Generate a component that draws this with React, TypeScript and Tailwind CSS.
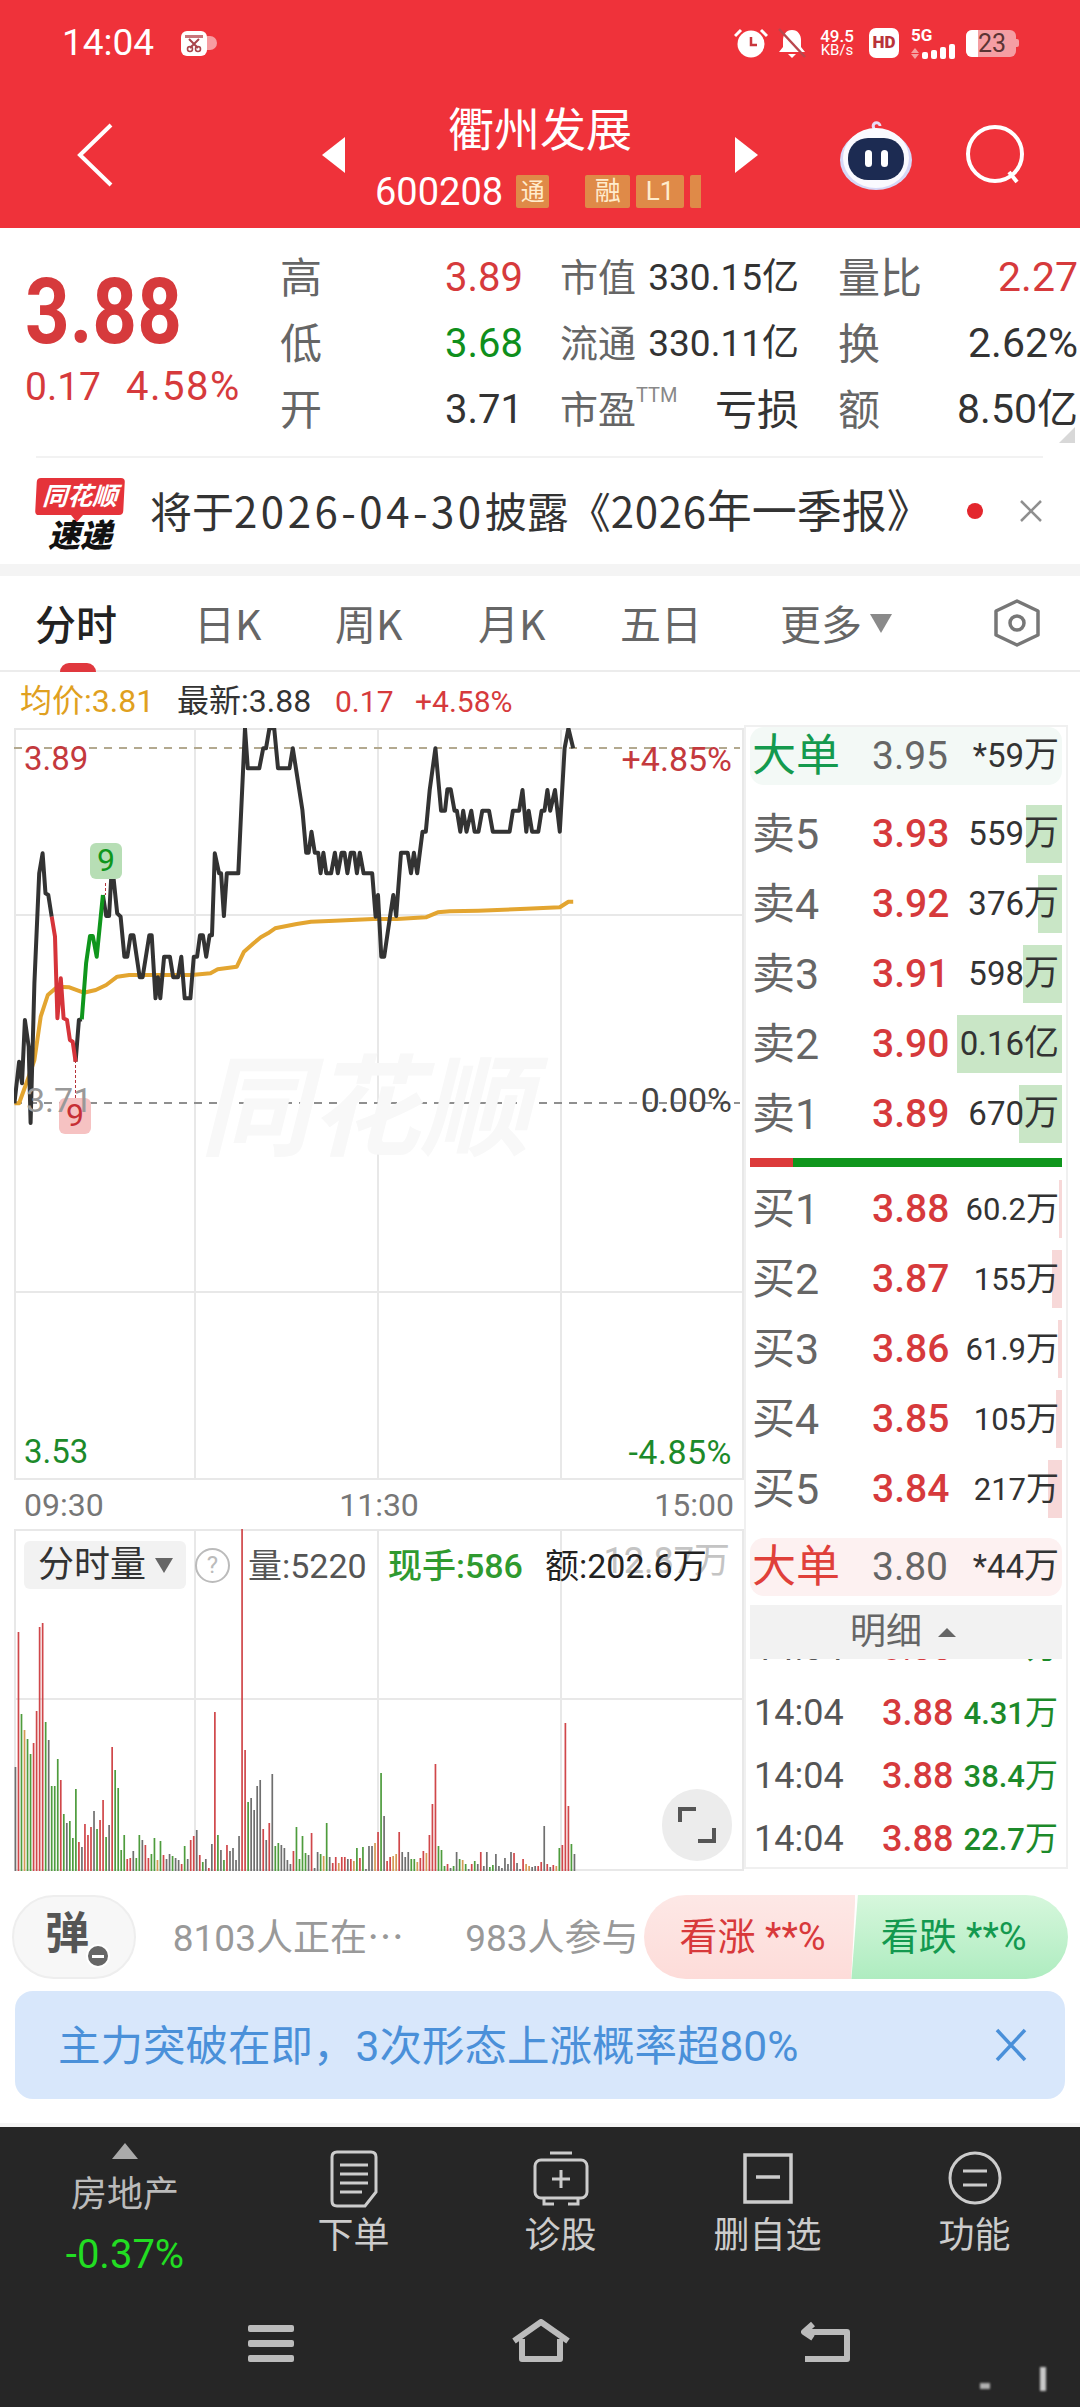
type Pt = [number, number];

// chart points were read off a 2.09x / 3x crop of the chart
const mapPts = (pts: Pt[]) => pts.map(([x, y]) => `${(x / 2.09).toFixed(1)},${(700 + y / 3).toFixed(1)}`).join(' ');

const blackA: Pt[] = [[30, 1210], [40, 1085], [46, 1150], [52, 960], [60, 1040], [64, 1269], [72, 850], [82, 520], [89, 460], [95, 580], [101, 585], [108, 650]];
const redLine: Pt[] = [[108, 650], [115, 710], [120, 955], [127, 835], [133, 955], [140, 960], [146, 1020], [152, 1025], [158, 1085]];
const blackB: Pt[] = [[158, 1085], [165, 960], [171, 958]];
const greenLine: Pt[] = [[171, 958], [180, 790], [188, 708], [194, 708], [202, 770], [215, 585]];
const blackC: Pt[] = [
  [215, 585], [222, 648], [228, 648], [234, 490], [245, 640], [252, 650], [260, 770], [266, 770], [273, 706], [279, 706], [292, 832], [298, 832], [312, 706], [317, 706], [325, 895], [330, 832], [335, 895], [343, 770], [355, 770], [362, 832], [372, 832], [379, 770], [386, 895], [398, 895], [405, 770], [412, 770], [418, 706], [424, 706], [431, 770], [438, 706], [443, 706], [449, 460], [458, 520], [462, 520], [468, 648], [474, 520], [498, 520], [512, 85], [518, 205], [542, 205], [550, 145], [556, 145], [563, 85], [573, 85], [581, 205], [605, 205], [612, 145], [632, 330], [640, 458], [645, 458], [651, 395], [658, 458], [665, 458], [670, 520], [676, 458], [682, 520], [692, 520], [700, 458], [706, 520], [714, 458], [720, 458], [726, 520], [733, 458], [740, 458], [746, 520], [752, 458], [760, 520], [778, 520], [785, 650], [790, 585], [797, 770], [803, 770], [815, 650], [822, 585], [828, 648], [838, 458], [852, 458], [859, 520], [865, 458], [872, 520], [883, 395], [890, 395], [898, 270], [910, 145], [922, 332], [930, 332], [935, 268], [942, 268], [950, 332], [955, 332], [962, 395], [968, 332], [975, 395], [985, 332], [992, 395], [1000, 395], [1008, 332], [1022, 332], [1030, 395], [1065, 395], [1072, 332], [1085, 332], [1092, 270], [1100, 395], [1105, 332], [1112, 395], [1125, 395], [1132, 332], [1138, 332], [1144, 270], [1150, 332], [1160, 270], [1170, 395], [1180, 145], [1188, 85], [1198, 145],
];
const avgLine: Pt[] = [[30, 1210], [40, 1210], [60, 1130], [72, 1080], [85, 950], [100, 885], [120, 860], [145, 862], [175, 878], [200, 870], [222, 855], [245, 830], [270, 825], [400, 825], [440, 820], [455, 808], [495, 800], [510, 755], [530, 730], [545, 712], [560, 700], [575, 685], [620, 672], [650, 665], [700, 662], [780, 657], [830, 657], [890, 652], [915, 637], [940, 634], [1000, 632], [1100, 626], [1170, 622], [1188, 605], [1198, 605]];

const volData =
  '104k 239r 157n 141o 132n 117n 128r 160r 244r 248r 149n 131k 85n 85n 112n 91r 57n 48k 50n 33n 82n 29r 24k 47r 36r 44r 60k 42n 51r 71r 34n 46k 124r 101n 83n 21n 36n 12r 13r 20k 13n 36n 31k 26r 13r 17n 33n 11o 30n 16r 12k 17k 15n 13k 11k 7r 25n 12k 31r 35r 41k 16r 9n 12k 3r 27k 159r 36n 21k 11n 26r 20k 23k 11k 35k 342r 121r 69n 73k 61k 85k 91k 42r 31k 48r 97k 25n 28n 26k 23k 11k 7k 20r 44n 12n 35n 18n 16k 38r 3k 19k 17n 15o 48n 14k 8r 14r 8o 14r 14r 12k 12r 10o 23n 13r 24n 2k 25k 25k 28o 39r 98n 55k 10r 14r 15o 17o 39r 19k 14k 19k 12n 12n 9o 13r 20r 18o 36r 67r 107r 25n 21n 5n 7r 3k 5n 19k 12n 11o 7n 2k 7r 10n 7k 19r 5k 19k 4n 6n 17k 5k 3k 13k 7k 19k 18r 8k 2k 12r 7o 5o 4k 5k 5r 9r 45k 7r 4k 6r 5o 23n 26r 148r 65r 27n 17k'.split(' ');

const volColor: Record<string, string> = { r: '#d0474a', n: '#4e9c3d', k: '#6f6f6f', o: '#d49a55' };

const asks = [
  { n: '卖5', p: '3.93', v: '559', u: '万', w: 36 },
  { n: '卖4', p: '3.92', v: '376', u: '万', w: 24 },
  { n: '卖3', p: '3.91', v: '598', u: '万', w: 39 },
  { n: '卖2', p: '3.90', v: '0.16', u: '亿', w: 105 },
  { n: '卖1', p: '3.89', v: '670', u: '万', w: 43 },
];
const bids = [
  { n: '买1', p: '3.88', v: '60.2', u: '万', w: 3 },
  { n: '买2', p: '3.87', v: '155', u: '万', w: 10 },
  { n: '买3', p: '3.86', v: '61.9', u: '万', w: 4 },
  { n: '买4', p: '3.85', v: '105', u: '万', w: 6 },
  { n: '买5', p: '3.84', v: '217', u: '万', w: 14 },
];
const trades = ['4.31', '38.4', '22.7'];

function StatusIcons() {
  return (
    <div className="flex items-center">
      <svg width="34" height="30" viewBox="0 0 34 30" className="mr-[9px]">
        <circle cx="17" cy="16" r="13.5" fill="#fff" />
        <path d="M17 9v8h6" stroke="#c9363c" strokeWidth="2.5" fill="none" />
        <path d="M1 8 7 2M33 8l-6-6" stroke="#fff" strokeWidth="3" />
      </svg>
      <svg width="30" height="30" viewBox="0 0 28 30" className="mr-[11px]">
        <path d="M14 2c6 0 9 5 9 10v7l4 5H1l4-5v-7C5 7 8 2 14 2Z" fill="#fff" />
        <path d="M10 26h8l-4 4Z" fill="#fff" />
        <path d="M1 1 27 29" stroke="#b9474d" strokeWidth="2.5" />
      </svg>
      <div className="flex flex-col items-center w-[38px] text-white leading-[14px] mr-[13px]">
        <span className="text-[17px] font-medium">49.5</span>
        <span className="text-[15px]">KB/s</span>
      </div>
      <div className="w-[30px] h-[30px] bg-white rounded-[7px] text-[#b9333a] text-[17px] font-black flex items-center justify-center mr-[12px]">HD</div>
      <div className="flex flex-col w-[46px] mr-[9px]">
        <span className="text-white text-[17px] font-bold leading-[14px]">5G</span>
        <div className="flex items-end gap-[3px] mt-[2px]">
          <div className="flex flex-col gap-[1px]">
            <div className="w-0 h-0 border-x-[4px] border-x-transparent border-b-[5px] border-b-[#f5a0a0]" />
            <div className="w-0 h-0 border-x-[4px] border-x-transparent border-t-[5px] border-t-[#f5a0a0]" />
          </div>
          <div className="w-[6px] h-[7px] bg-white rounded-[2px]" />
          <div className="w-[6px] h-[9px] bg-white rounded-[2px]" />
          <div className="w-[6px] h-[12px] bg-white rounded-[2px]" />
          <div className="w-[6px] h-[15px] bg-white rounded-[2px]" />
        </div>
      </div>
      <div className="w-[50px] h-[27px] rounded-[6px] bg-[#f59ea3] flex">
        <div className="w-[12px] h-full bg-white rounded-l-[6px]" />
        <span className="text-[#5b3434] text-[25px] leading-[27px]">23</span>
      </div>
      <div className="w-[3px] h-[8px] bg-[#f59ea3] rounded-r-[2px]" />
    </div>
  );
}

function Robot() {
  return (
    <svg width="74" height="74" viewBox="0 0 74 74">
      <path d="M37 14c-3-4-4-7-1-9 3-1 5 1 5 3" stroke="#e8dcf5" strokeWidth="3" fill="none" />
      <ellipse cx="37" cy="42" rx="36" ry="30" fill="#d6d8f7" />
      <ellipse cx="37" cy="40" rx="33" ry="30" fill="#fafaff" />
      <rect x="9" y="20" width="56" height="42" rx="20" fill="#1c2b52" />
      <rect x="26" y="32" width="7" height="17" rx="3.5" fill="#fff" />
      <rect x="42" y="32" width="7" height="17" rx="3.5" fill="#fff" />
    </svg>
  );
}

function Header() {
  return (
    <div className="bg-[#ef323a] h-[228px] text-white">
      <div className="flex justify-between items-center h-[86px] pl-[62px] pr-[61px]">
        <div className="flex items-center">
          <span className="text-[37px]">14:04</span>
          <svg width="26" height="25" viewBox="0 0 26 25" className="ml-[27px]">
            <rect width="26" height="25" rx="6" fill="#fff" />
            <rect x="4" y="4" width="18" height="3" fill="#c9747a" />
            <path d="M8 8 17 17M18 8 9 17" stroke="#a8454c" strokeWidth="2" />
            <circle cx="9" cy="18" r="2.5" stroke="#a8454c" strokeWidth="1.6" fill="none" />
            <circle cx="17" cy="18" r="2.5" stroke="#a8454c" strokeWidth="1.6" fill="none" />
          </svg>
          <div className="w-[10px] h-[14px] rounded-r-full bg-[#f79ca1]" />
        </div>
        <StatusIcons />
      </div>
      <div className="flex items-center h-[142px] pb-[4px]">
        <svg width="36" height="64" viewBox="0 0 36 64" className="ml-[77px] shrink-0">
          <path d="M34 2 3 32 34 62" stroke="#fff" strokeWidth="4" fill="none" />
        </svg>
        <div className="ml-[209px] w-0 h-0 border-y-[18px] border-y-transparent border-r-[23px] border-r-white" />
        <div className="w-[390px] pb-[3px] flex flex-col items-center">
          <span className="text-[46px] leading-[56px] font-['Noto_Sans_CJK_SC',sans-serif]">衢州发展</span>
          <div className="flex items-center h-[36px] mt-[20px] w-[330px]">
            <span className="text-[38px] leading-[36px]">600208</span>
            <span className="ml-[13px] w-[33px] h-[33px] bg-[#df8a48] text-[#ffeccd] text-[24px] flex items-center justify-center rounded-[2px]">通</span>
            <span className="ml-[36px] w-[45px] h-[33px] bg-[#df8a48] text-[#ffeccd] text-[26px] flex items-center justify-center rounded-[2px]">融</span>
            <span className="ml-[6px] w-[48px] h-[33px] bg-[#df8a48] text-[#ffeccd] text-[26px] flex items-center justify-center rounded-[2px]">L1</span>
            <span className="ml-[6px] w-[11px] h-[33px] bg-[#df8a48] rounded-l-[2px]" />
          </div>
        </div>
        <div className="w-0 h-0 border-y-[18px] border-y-transparent border-l-[23px] border-l-white" />
        <div className="ml-[81px]">
          <Robot />
        </div>
        <svg width="62" height="62" viewBox="0 0 62 62" className="ml-[52px]">
          <circle cx="30" cy="30" r="27" stroke="#fff" strokeWidth="4" fill="none" />
          <path d="M44 48l8 10" stroke="#fff" strokeWidth="4" />
        </svg>
      </div>
    </div>
  );
}

function Quote() {
  const rowCls = 'h-[66px] flex items-center';
  return (
    <div className="relative h-[228px] flex">
      <div className="w-[280px] pl-[25px] pt-[35px] text-[#d63a3c]">
        <div className="text-[78px] leading-[100px] font-bold scale-y-[1.17]">3.88</div>
        <div className="flex items-center text-[39px] leading-[44px] mt-[2px]">
          <span className="w-[101px]">0.17</span>
          <span className="tracking-[1.5px] text-[40px]">4.58%</span>
        </div>
      </div>
      <div className="pt-[17px] text-[#333]">
        {[
          ['高', '3.89', 'text-[#d63a3c]', '市值', '330.15亿', '量比', '2.27', 'text-[#d63a3c]'],
          ['低', '3.68', 'text-[#0f8f1c]', '流通', '330.11亿', '换', '2.62%', 'text-[#333]'],
          ['开', '3.71', 'text-[#333]', '市盈', '亏损', '额', '8.50亿', 'text-[#333]'],
        ].map((r, i) => (
          <div key={i} className={rowCls}>
            <span className="w-[165px] text-[42px] text-[#666]">{r[0]}</span>
            <span className={`w-[115px] text-[40px] ${r[2]}`}>{r[1]}</span>
            <div className="w-[239px] flex items-center justify-between text-[37px]">
              <span className="text-[38px] text-[#666] flex items-start">
                {r[3]}
                {i === 2 && <span className="text-[20px] leading-[26px] text-[#888]">TTM</span>}
              </span>
              <span className={i === 2 ? 'text-[42px]' : ''}>{r[4]}</span>
            </div>
            <div className="ml-[39px] w-[240px] flex items-center justify-between">
              <span className="text-[42px] text-[#666]">{r[5]}</span>
              <span className={`text-[41px] whitespace-nowrap ${r[7]}`}>{r[6]}</span>
            </div>
          </div>
        ))}
      </div>
      <div className="absolute right-[5px] bottom-[13px] w-0 h-0 border-l-[16px] border-l-transparent border-b-[16px] border-b-[#d8d8d8]" />
    </div>
  );
}

function News() {
  return (
    <div className="pl-[36px] pr-[37px]">
      <div className="border-t-2 border-[#f2f2f2] h-[108px] flex items-center">
        <div className="w-[88px] flex flex-col items-center shrink-0 mt-[10px]">
          <div className="relative w-[88px] h-[37px] bg-[#e5333a] rounded-[4px] -skew-x-3 text-white text-[25px] leading-[37px] font-bold italic text-center">
            同花顺
            <div className="absolute left-[36px] top-[37px] w-0 h-0 border-x-[6px] border-x-transparent border-t-[7px] border-t-[#e5333a]" />
          </div>
          <div className="text-[32px] leading-[36px] mt-[3px] font-black italic text-[#111]">速递</div>
        </div>
        <div className="ml-[26px] pb-[5px] text-[42px] text-[#333] whitespace-nowrap font-['Noto_Sans_CJK_SC',sans-serif]">
          将于<span className="tracking-[3.5px]">2026-04-30</span>披露《<span className="tracking-[0.7px]">2026</span><span className="text-[45px]">年一季报》</span>
        </div>
        <div className="ml-auto w-[16px] h-[16px] rounded-full bg-[#e3262d] shrink-0" />
        <svg width="24" height="24" viewBox="0 0 24 24" className="ml-[36px] shrink-0">
          <path d="M2 2 22 22M22 2 2 22" stroke="#8f8f8f" strokeWidth="2.5" />
        </svg>
      </div>
    </div>
  );
}

function Tabs() {
  return (
    <div className="relative h-[96px] border-b-2 border-[#ececec] flex items-center pl-[35px] text-[41px] text-[#666] font-['Noto_Sans_CJK_SC',sans-serif]">
      <span className="text-[#222] font-medium w-[159px]">分时</span>
      <span className="w-[141px]">日K</span>
      <span className="w-[143px]">周K</span>
      <span className="w-[142px]">月K</span>
      <span className="w-[160px]">五日</span>
      <span>更多</span>
      <div className="ml-[8px] w-0 h-0 border-x-[11px] border-x-transparent border-t-[19px] border-t-[#8a8a8a]" />
      <svg width="50" height="48" viewBox="0 0 50 48" className="ml-[100px]">
        <path d="M25 2 46 12V36L25 46 4 36V12Z" stroke="#777" strokeWidth="3.5" strokeLinejoin="round" fill="none" />
        <circle cx="25" cy="24" r="7" stroke="#777" strokeWidth="3.5" fill="none" />
      </svg>
      <div className="absolute left-[60px] bottom-[-2px] w-[36px] h-[9px] bg-[#e0383e] rounded-t-full" />
    </div>
  );
}

function PriceChart() {
  const grid = '#e8e8e8';
  return (
    <div className="relative w-[730px] h-[752px] font-['Roboto','Noto_Sans_CJK_SC',sans-serif]">
      <svg width="730" height="752" viewBox="14 728 730 752">
        <g stroke={grid} strokeWidth="2" fill="none">
          <rect x="15" y="729" width="728" height="750" />
          <path d="M195 728V1480M378 728V1480M561 728V1480M14 915H744M14 1292H744" />
        </g>
        <path d="M14 748H740" stroke="#b3a98f" strokeWidth="2" strokeDasharray="8 7" />
        <path d="M14 1103H740" stroke="#8f8f8f" strokeWidth="2" strokeDasharray="8 7" />
        <path d="M75.5 1060V1100M105.5 883V895" stroke="#b5333a" strokeWidth="1" strokeDasharray="3 2" />
        <polyline points={mapPts(avgLine)} fill="none" stroke="#e3a530" strokeWidth="4" strokeLinejoin="round" />
        <g fill="none" strokeWidth="4" strokeLinejoin="round">
          <polyline points={mapPts(blackA)} stroke="#333" />
          <polyline points={mapPts(blackB)} stroke="#333" />
          <polyline points={mapPts(blackC)} stroke="#333" />
          <polyline points={mapPts(redLine)} stroke="#d6343a" />
          <polyline points={mapPts(greenLine)} stroke="#0f961c" />
        </g>
      </svg>
      <span className="absolute left-[186px] top-[322px] text-[110px] leading-[120px] font-bold italic text-[#f8f8f8] whitespace-nowrap">同花顺</span>
      <span className="absolute left-[10px] top-[11px] text-[33px] leading-[40px] text-[#c4393d]">3.89</span>
      <span className="absolute right-[12px] top-[11px] text-[34px] leading-[40px] text-[#c4393d]">+4.85%</span>
      <div className="absolute left-[76px] top-[115px] w-[32px] h-[36px] rounded-[6px] bg-[#b7deb5] text-[#0f961c] text-[32px] leading-[34px] text-center">9</div>
      <div className="absolute left-[45px] top-[370px] w-[32px] h-[36px] rounded-[6px] bg-[#f6c2c2] text-[#c62f35] text-[32px] leading-[34px] text-center">9</div>
      <span className="absolute left-[12px] top-[352px] text-[34px] leading-[40px] text-[#999]">3.71</span>
      <span className="absolute right-[12px] top-[352px] text-[34px] leading-[40px] text-[#444]">0.00%</span>
      <span className="absolute left-[10px] bottom-[8px] text-[33px] leading-[40px] text-[#1c8a2a]">3.53</span>
      <span className="absolute right-[12px] bottom-[8px] text-[34px] leading-[40px] text-[#1c8a2a] tracking-[0.5px]">-4.85%</span>
    </div>
  );
}

function VolumeChart() {
  const step = 559 / (volData.length - 1);
  return (
    <div className="relative w-[730px] h-[342px] font-['Roboto','Noto_Sans_CJK_SC',sans-serif]">
      <svg width="730" height="342" viewBox="14 1529 730 342">
        <g stroke="#e8e8e8" strokeWidth="2" fill="none">
          <rect x="15" y="1530" width="728" height="340" />
          <path d="M195 1529V1871M378 1529V1871M561 1529V1871M14 1699H744" />
        </g>
        {volData.map((d, i) => {
          const h = parseInt(d, 10);
          const t = d[d.length - 1];
          return <rect key={i} x={14.6 + i * step} y={1871 - h} width="1.7" height={h} fill={volColor[t]} />;
        })}
      </svg>
      <div className="absolute left-[10px] top-[12px] w-[162px] h-[48px] rounded-[6px] bg-[#f2f2f2] flex items-center pl-[14px] text-[36px] text-[#333]">
        分时量
        <div className="ml-[9px] w-0 h-0 border-x-[9px] border-x-transparent border-t-[15px] border-t-[#666]" />
      </div>
      <div className="absolute left-[181px] top-[19px] w-[35px] h-[35px] rounded-full border-2 border-[#bbb] text-[#bbb] text-[24px] leading-[31px] text-center">?</div>
      <span className="absolute left-[234px] top-[15px] text-[34px] leading-[44px] text-[#555] whitespace-nowrap">量:5220</span>
      <span className="absolute left-[374px] top-[15px] text-[34px] leading-[44px] text-[#2f9a2f] font-medium whitespace-nowrap">现手:586</span>
      <span className="absolute right-[14px] top-[10px] text-[36px] leading-[44px] text-[#c4c4c4] whitespace-nowrap">12.87万</span>
      <span className="absolute left-[531px] top-[15px] text-[34px] leading-[44px] text-[#222] whitespace-nowrap">额:202.6万</span>
      <div className="absolute left-[648px] top-[260px] w-[70px] h-[72px] rounded-full bg-[#ececec] flex items-center justify-center">
        <svg width="38" height="38" viewBox="0 0 38 38">
          <path d="M2 16V3H18M36 22V35H20" stroke="#555" strokeWidth="4" fill="none" />
        </svg>
      </div>
    </div>
  );
}

type Level = { n: string; p: string; v: string; u: string; w: number };

function BookRow({ row, bar, digits, unit }: { row: Level; bar: string; digits: string; unit: string }) {
  return (
    <div className="relative h-[58px] flex items-center pl-[2px] pr-[3px]">
      <div className={`absolute right-0 inset-y-0 ${bar}`} style={{ width: row.w }} />
      <span className="relative w-[120px] text-[43px] text-[#666]">{row.n}</span>
      <span className="relative text-[39px] font-medium text-[#d63a3c]">{row.p}</span>
      <span className={`relative ml-auto whitespace-nowrap text-[#333] ${digits}`}>
        {row.v}
        <span className={unit}>{row.u}</span>
      </span>
    </div>
  );
}

function BigOrder({ color, bg, p, v }: { color: string; bg: string; p: string; v: string }) {
  return (
    <div className={`h-[58px] rounded-[14px] flex items-center pl-[2px] pr-[3px] ${bg}`}>
      <span className={`w-[120px] text-[44px] ${color}`}>大单</span>
      <span className="text-[39px] text-[#666]">{p}</span>
      <span className="ml-auto text-[33px] text-[#333] whitespace-nowrap">*{v}<span className="text-[35px]">万</span></span>
    </div>
  );
}

function OrderBook() {
  return (
    <div className="relative mt-[-1px] w-[324px] h-[1144px] border-x-2 border-y-2 border-[#f0f0f0] px-[4px] flex flex-col font-['Roboto','Noto_Sans_CJK_SC',sans-serif]">
      <BigOrder color="text-[#149a4e]" bg="bg-[#f3f9f6]" p="3.95" v="59" />
      <div className="mt-[20px] flex flex-col gap-[12px]">
        {asks.map((r) => (
          <BookRow key={r.n} row={r} bar="bg-[#c9e6c6]" digits="text-[33px]" unit="text-[35px]" />
        ))}
      </div>
      <div className="mt-[15px] h-[9px] flex bg-[#0f961c]">
        <div className="w-[43px] h-full bg-[#dc3a3a]" />
      </div>
      <div className="mt-[13px] flex flex-col gap-[12px]">
        {bids.map((r) => (
          <BookRow key={r.n} row={r} bar="bg-[#f7d8d8]" digits="text-[31px]" unit="text-[33px]" />
        ))}
      </div>
      <div className="mt-[20px]">
        <BigOrder color="text-[#e0403a]" bg="bg-[#fdf1f1]" p="3.80" v="44" />
      </div>
      <div className="mt-[9px] h-[54px] bg-[#f2f2f2] flex items-center justify-center text-[36px] text-[#666] pr-[6px]">
        明细
        <div className="ml-[16px] w-0 h-0 border-x-[9px] border-x-transparent border-b-[9px] border-b-[#666]" />
      </div>
      <div className="h-[10px] overflow-hidden relative">
        <div className="absolute left-[4px] right-[4px] -top-[31px] flex items-center h-[40px] text-[36px] whitespace-nowrap">
          <span className="w-[128px] text-[#555]">14:04</span>
          <span className="text-[#d63a3c]">3.88</span>
          <span className="ml-auto text-[#1c8a2a] text-[31px]">11.5万</span>
        </div>
      </div>
      <div className="mt-[24px] flex flex-col gap-[23px]">
        {trades.map((v) => (
          <div key={v} className="h-[40px] flex items-center pl-[4px] pr-[4px] text-[36px] whitespace-nowrap">
            <span className="w-[128px] text-[#555]">14:04</span>
            <span className="font-medium text-[#d63a3c]">3.88</span>
            <span className="ml-auto text-[31px] font-medium text-[#1c8a2a]">{v}<span className="text-[33px] font-normal">万</span></span>
          </div>
        ))}
      </div>
    </div>
  );
}

function BottomBar() {
  const item = 'w-[207px] pt-[20px] flex flex-col items-center';
  const label = 'text-[36px] leading-[40px] text-[#ccc] mt-[8px]';
  return (
    <div className="relative bg-[#262626] h-[280px] flex flex-col">
      <div className="flex pt-[3px] h-[190px]">
        <div className="w-[250px] pt-[13px] flex flex-col items-center">
          <div className="w-0 h-0 border-x-[13px] border-x-transparent border-b-[16px] border-b-[#aaa]" />
          <span className="text-[36px] leading-[44px] mt-[14px] text-[#bbb]">房地产</span>
          <span className="text-[40px] leading-[44px] mt-[16px] text-[#22dd22]">-0.37%</span>
        </div>
        <div className={item}>
          <svg width="50" height="58" viewBox="0 0 50 58" fill="none" stroke="#ccc" strokeWidth="3">
            <path d="M8 2H42Q47 2 47 7V42L36 56H8Q3 56 3 51V7Q3 2 8 2Z" />
            <path d="M11 15H39M11 24H39M11 33H39M11 42H33" />
          </svg>
          <span className={label}>下单</span>
        </div>
        <div className={item}>
          <svg width="58" height="58" viewBox="0 0 58 58" fill="none" stroke="#ccc" strokeWidth="3">
            <path d="M18 3H40" />
            <rect x="3" y="10" width="52" height="38" rx="6" />
            <path d="M29 20V38M20 29H38M12 48V54H22M46 48V54H36" />
          </svg>
          <span className={label}>诊股</span>
        </div>
        <div className={item}>
          <svg width="50" height="58" viewBox="0 0 50 58" fill="none" stroke="#ccc" strokeWidth="3.5">
            <rect x="2" y="5" width="46" height="47" />
            <path d="M13 27H37" />
          </svg>
          <span className={label}>删自选</span>
        </div>
        <div className={item}>
          <svg width="56" height="58" viewBox="0 0 56 58" fill="none" stroke="#ccc" strokeWidth="3">
            <circle cx="28" cy="28" r="25" />
            <path d="M16 21H40M16 35H40" />
          </svg>
          <span className={label}>功能</span>
        </div>
      </div>
      <div className="flex items-end h-[46px] pl-[247px]">
        <svg width="48" height="38" viewBox="0 0 48 38" fill="#bbb">
          <rect x="1" width="46" height="7" rx="2" />
          <rect x="1" y="15" width="46" height="7" rx="2" />
          <rect x="1" y="30" width="46" height="7" rx="2" />
        </svg>
        <svg width="60" height="44" viewBox="0 0 60 44" fill="none" stroke="#bbb" strokeWidth="6" strokeLinejoin="round" className="ml-[216px]">
          <path d="M3 22 30 3 57 22" />
          <path d="M11 20V40H49V20" />
        </svg>
        <svg width="52" height="42" viewBox="0 0 52 42" fill="none" stroke="#bbb" strokeWidth="6" strokeLinejoin="round" className="ml-[230px]">
          <path d="M3 11H46V38H4" />
          <path d="M12 3 3 11l9 6" />
        </svg>
      </div>
      <div className="absolute left-[1040px] top-[240px] w-[6px] h-[24px] bg-[#c8c8c8] blur-[1px]" />
      <div className="absolute left-[980px] top-[256px] w-[10px] h-[6px] bg-[#b0b0b0] blur-[1px]" />
    </div>
  );
}

export default function App() {
  return (
    <div className="w-[1080px] h-[2408px] overflow-hidden bg-white font-['Roboto','Noto_Sans_CJK_SC',sans-serif]">
      <Header />
      <Quote />
      <News />
      <div className="h-[12px] bg-[#f4f4f4]" />
      <Tabs />
      <div className="h-[54px] flex items-center pl-[20px] pt-[4px] text-[30px] whitespace-nowrap">
        <span className="w-[157px] text-[32px] text-[#e0a020]">均价:3.81</span>
        <span className="w-[158px] text-[32px] text-[#333]">最新:3.88</span>
        <span className="w-[80px] text-[#d63a3c]">0.17</span>
        <span className="text-[#d63a3c]">+4.58%</span>
      </div>
      <div className="flex">
        <div className="w-[744px] pl-[14px] pt-[2px] shrink-0">
          <PriceChart />
          <div className="h-[49px] w-[730px] flex items-center justify-between px-[10px] text-[32px] text-[#777]">
            <span>09:30</span>
            <span>11:30</span>
            <span>15:00</span>
          </div>
          <VolumeChart />
        </div>
        <OrderBook />
      </div>
      <div className="mt-[24px] flex items-center h-[84px] pl-[12px] pr-[12px]">
        <div className="relative w-[124px] h-[84px] rounded-full bg-[#f7f7f7] border-2 border-[#eee] flex items-center justify-center text-[44px] font-bold text-[#555] pr-[14px] pb-[6px]">
          弹
          <div className="absolute left-[72px] top-[47px] w-[24px] h-[24px] rounded-full bg-[#666] border-2 border-white flex items-center justify-center">
            <div className="w-[12px] h-[3px] bg-white" />
          </div>
        </div>
        <span className="ml-[37px] pt-[4px] w-[293px] text-[37px] text-[#999] whitespace-nowrap">8103人正在⋯</span>
        <span className="w-[179px] pt-[4px] text-[37px] text-[#999] whitespace-nowrap">983人参与</span>
        <div className="w-[212px] h-[84px] rounded-l-full bg-gradient-to-b from-[#fde8e6] to-[#fddcd9] flex items-center justify-center pl-[6px] text-[38px] text-[#d8393b] whitespace-nowrap [clip-path:polygon(0_0,100%_0,98%_100%,0_100%)]">
          看涨 **%
        </div>
        <div className="w-[217px] -ml-[4px] h-[84px] rounded-r-full bg-gradient-to-b from-[#d6f7dc] to-[#aeecc0] flex items-center justify-center pr-[12px] text-[38px] text-[#13994f] whitespace-nowrap [clip-path:polygon(3%_0,100%_0,100%_100%,0_100%)]">
          看跌 **%
        </div>
      </div>
      <div className="mt-[12px] mx-[15px] h-[108px] rounded-[18px] bg-[#d8e7fb] flex items-center pl-[43px] pr-[38px] text-[#4a90d9]">
        <span className="text-[42.5px] pt-[3px] whitespace-nowrap">主力突破在即，3次形态上涨概率超80%</span>
        <svg width="32" height="34" viewBox="0 0 32 34" className="ml-auto">
          <path d="M2 2 30 32M30 2 2 32" stroke="#4a90d9" strokeWidth="3.5" />
        </svg>
      </div>
      <div className="mt-[24px] h-[4px] bg-[#f5f5f5]" />
      <BottomBar />
    </div>
  );
}
